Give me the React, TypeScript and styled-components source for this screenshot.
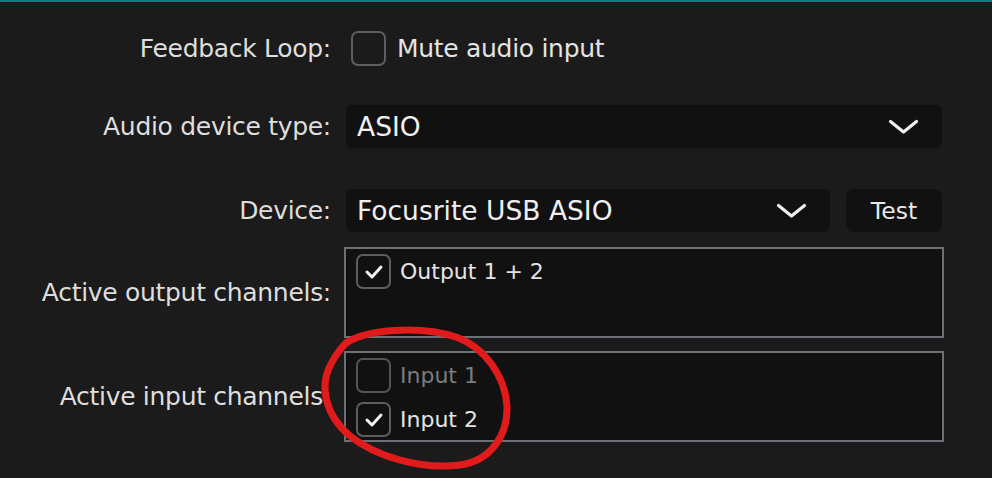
import React from "react";
import styled, { createGlobalStyle } from "styled-components";

const Global = createGlobalStyle`
  html, body { margin: 0; padding: 0; background: #1b1b1b; }
  * { box-sizing: border-box; }
`;

const Page = styled.div`
  position: relative;
  width: 992px;
  height: 478px;
  overflow: hidden;
  background: #1b1b1b;
  border-top: 2px solid #0b7f80;
  font-family: "DejaVu Sans", "Liberation Sans", sans-serif;
  color: #e0e0e0;
  display: flex;
  flex-direction: column;
`;

const Row = styled.div<{ $top: number; $h: number }>`
  display: flex;
  align-items: center;
  margin-top: ${(p) => p.$top}px;
  height: ${(p) => p.$h}px;
`;

const Label = styled.div`
  flex: 0 0 331px;
  text-align: right;
  font-size: 25px;
  letter-spacing: -0.3px;
  white-space: nowrap;
  color: #dedede;
`;

const Control = styled.div<{ $ml: number; $w?: number }>`
  margin-left: ${(p) => p.$ml}px;
  ${(p) => (p.$w ? `width: ${p.$w}px;` : "")}
  height: 100%;
  display: flex;
  align-items: center;
`;

const Combo = styled.div<{ $w: number }>`
  width: ${(p) => p.$w}px;
  height: 100%;
  background: #111111;
  border-radius: 5px;
  display: flex;
  align-items: center;
  justify-content: space-between;
  padding: 0 23px 0 11px;
  font-size: 26.5px;
  color: #efefef;
  white-space: nowrap;
`;

const Chevron = styled.svg`
  width: 31px;
  height: 16px;
  flex: none;
`;

const Button = styled.div`
  margin-left: 16px;
  width: 96px;
  height: 100%;
  background: #111111;
  border-radius: 8px;
  display: flex;
  align-items: center;
  justify-content: center;
  font-size: 23.5px;
  color: #e8e8e8;
`;

const Box = styled.span<{ $dim?: boolean }>`
  width: 35px;
  height: 35px;
  flex: none;
  border: 2px solid ${(p) => (p.$dim ? "#545454" : "#5e5e5e")};
  border-radius: 7px;
  display: flex;
  align-items: center;
  justify-content: center;
`;

const CheckText = styled.span<{ $size: number; $dim?: boolean }>`
  margin-left: ${(p) => (p.$size > 23 ? 11 : 9)}px;
  font-size: ${(p) => p.$size}px;
  letter-spacing: ${(p) => (p.$size > 23 ? "-0.3px" : "0")};
  color: ${(p) => (p.$dim ? "#7c7c7c" : "#e4e4e4")};
  white-space: nowrap;
`;

const ListBox = styled.div`
  width: 600px;
  height: 91px;
  border: 2px solid #6b7176;
  background: #111111;
  display: flex;
  flex-direction: column;
`;

const Item = styled.div`
  height: 44px;
  flex: none;
  display: flex;
  align-items: center;
  padding-left: 10px;
`;

const Annotation = styled.svg`
  position: absolute;
  left: 0;
  top: -2px;
  width: 992px;
  height: 478px;
  pointer-events: none;
`;

function CheckBox({ checked, dim }: { checked?: boolean; dim?: boolean }) {
  return (
    <Box $dim={dim}>
      {checked && (
        <svg width="31" height="31" viewBox="0 0 31 31">
          <path
            d="M9 16 L14 21 L23 11"
            fill="none"
            stroke="#f2f2f2"
            strokeWidth="3"
            strokeLinecap="round"
            strokeLinejoin="round"
          />
        </svg>
      )}
    </Box>
  );
}

function Check({
  checked,
  dim,
  label,
  size,
}: {
  checked?: boolean;
  dim?: boolean;
  label: string;
  size: number;
}) {
  return (
    <>
      <CheckBox checked={checked} dim={dim} />
      <CheckText $size={size} $dim={dim}>
        {label}
      </CheckText>
    </>
  );
}

function Down() {
  return (
    <Chevron viewBox="0 0 31 16">
      <path
        d="M2.5 2.5 L15.5 13 L28.5 2.5"
        fill="none"
        stroke="#f0f0f0"
        strokeWidth="3.2"
        strokeLinecap="round"
        strokeLinejoin="round"
      />
    </Chevron>
  );
}

export default function App() {
  return (
    <>
      <Global />
      <Page>
        <Row $top={29} $h={35}>
          <Label>Feedback Loop:</Label>
          <Control $ml={20}>
            <Check label="Mute audio input" size={25} />
          </Control>
        </Row>
        <Row $top={39} $h={43}>
          <Label>Audio device type:</Label>
          <Control $ml={15}>
            <Combo $w={596}>
              <span>ASIO</span>
              <Down />
            </Combo>
          </Control>
        </Row>
        <Row $top={41} $h={43}>
          <Label>Device:</Label>
          <Control $ml={15}>
            <Combo $w={484}>
              <span>Focusrite USB ASIO</span>
              <Down />
            </Combo>
            <Button>Test</Button>
          </Control>
        </Row>
        <Row $top={15} $h={91}>
          <Label>Active output channels:</Label>
          <Control $ml={13}>
            <ListBox>
              <Item>
                <Check checked label="Output 1 + 2" size={22} />
              </Item>
            </ListBox>
          </Control>
        </Row>
        <Row $top={13} $h={91}>
          <Label>Active input channels:</Label>
          <Control $ml={13}>
            <ListBox>
              <Item>
                <Check dim label="Input 1" size={22} />
              </Item>
              <Item>
                <Check checked label="Input 2" size={22} />
              </Item>
            </ListBox>
          </Control>
        </Row>
        <Annotation viewBox="0 0 992 478">
          <path
            d="M344 345 C362 329, 420 325, 456 337 C486 348, 505 377, 507 406 C508 436, 490 461, 460 465 C420 470, 375 456, 350 436 C325 415, 319 386, 331 364 C335 356, 339 350, 347 342"
            fill="none"
            stroke="#e11b1b"
            strokeWidth="7"
            strokeLinecap="round"
            strokeLinejoin="round"
          />
        </Annotation>
      </Page>
    </>
  );
}
